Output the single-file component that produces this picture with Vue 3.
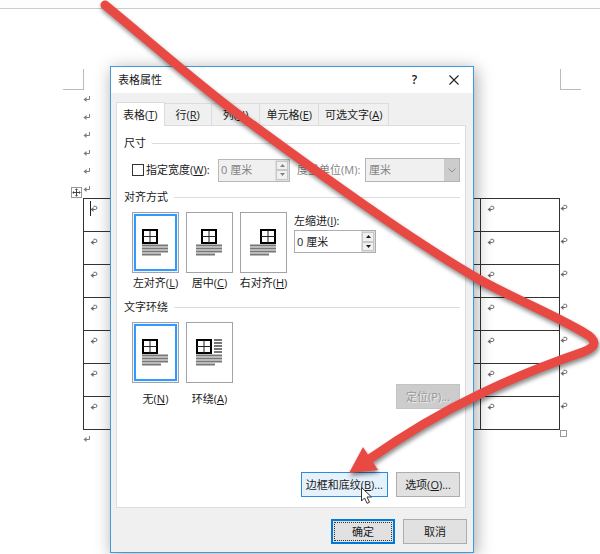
<template>
  <div class="word">
    <svg class="defs" aria-hidden="true">
      <symbol id="para-mark" viewBox="0 0 8 8">
        <path d="M6.5 1v3.5H2.5" fill="none" stroke="#7c7c7c" />
        <path d="M0.5 4.5L3.5 2v5z" fill="#7c7c7c" />
      </symbol>
      <symbol id="cell-mark" viewBox="0 0 8 8">
        <path d="M3.5 1.3h1.8a1.6 1.6 0 0 1 0 3.2H2.5" fill="none" stroke="#6c6c6c" />
        <path d="M0.5 4.5L3.5 2v5z" fill="#6c6c6c" />
      </symbol>
    </svg>

    <main class="document">
      <div class="ruler"></div>
      <div class="corners">
        <span class="corner corner-left"></span>
        <span class="corner corner-right"></span>
      </div>
      <div class="content">
        <div v-for="n in 6" :key="n" class="para">
          <svg class="mark"><use href="#para-mark" /></svg>
        </div>
        <div class="table-wrap">
          <svg class="move-handle" viewBox="0 0 11 11">
            <rect x="0.5" y="0.5" width="10" height="10" fill="#fff" stroke="#999" />
            <path d="M5.5 2v7M2 5.5h7" stroke="#444" />
            <path d="M5.5 1.2L7 3H4zM5.5 9.8L7 8H4zM1.2 5.5L3 4v3zM9.8 5.5L8 4v3z" fill="#444" />
          </svg>
          <span class="caret"></span>
          <table>
            <tbody>
              <tr v-for="r in 7" :key="r">
                <td v-for="c in 6" :key="c">
                  <svg class="mark"><use href="#cell-mark" /></svg>
                </td>
              </tr>
            </tbody>
          </table>
          <div class="row-ends">
            <div v-for="r in 7" :key="r" class="row-end">
              <svg class="mark"><use href="#cell-mark" /></svg>
            </div>
          </div>
          <span class="resize-handle"></span>
        </div>
        <div class="para">
          <svg class="mark"><use href="#para-mark" /></svg>
        </div>
      </div>
    </main>

    <section class="dialog" role="dialog" aria-labelledby="dialog-title">
      <header class="title-bar">
        <h1 id="dialog-title">表格属性</h1>
        <button class="title-btn" aria-label="帮助">?</button>
        <button class="title-btn" aria-label="关闭">
          <svg width="10" height="10" viewBox="0 0 10 10">
            <path d="M0.5 0.5l9 9M9.5 0.5l-9 9" stroke="#222" stroke-width="1.1" />
          </svg>
        </button>
      </header>

      <div class="tabs" role="tablist">
        <button
          v-for="tab in tabs"
          :key="tab.key"
          class="tab"
          :class="{ active: tab.key === activeTab, short: tab.text.length === 1 }"
          role="tab"
          @click="activeTab = tab.key"
        >{{ tab.text }}(<u>{{ tab.key }}</u>)</button>
      </div>

      <div class="panel">
        <h2>尺寸</h2>
        <div class="size-row">
          <label class="check">
            <input v-model="useWidth" type="checkbox" />
            <span>指定宽度(<u>W</u>):</span>
          </label>
          <div class="spinner width-spinner" :class="{ disabled: !useWidth }">
            <input v-model="width" type="text" aria-label="指定宽度" :disabled="!useWidth" />
            <div class="arrows">
              <button :disabled="!useWidth" aria-label="增加">
                <svg width="5" height="3" viewBox="0 0 5 3"><path d="M0 3L2.5 0 5 3z" fill="currentColor" /></svg>
              </button>
              <button :disabled="!useWidth" aria-label="减少">
                <svg width="5" height="3" viewBox="0 0 5 3"><path d="M0 0L2.5 3 5 0z" fill="currentColor" /></svg>
              </button>
            </div>
          </div>
          <label class="unit-label" for="unit">度量单位(M):</label>
          <div class="select">
            <select id="unit" v-model="unit" :disabled="!useWidth">
              <option>厘米</option>
              <option>百分比</option>
            </select>
            <svg class="chevron" width="8" height="5" viewBox="0 0 8 5">
              <path d="M0.5 0.5L4 4 7.5 0.5" fill="none" stroke="#8c8c8c" />
            </svg>
          </div>
        </div>

        <h2>对齐方式</h2>
        <div class="option-row">
          <label v-for="a in aligns" :key="a.key" class="option">
            <input v-model="align" type="radio" name="align" :value="a.key" />
            <span class="tile">
              <svg width="27" height="27" viewBox="0 0 27 27">
                <rect :x="a.x + 1" y="1" width="14" height="13" fill="#fff" stroke="#000" stroke-width="2" />
                <path :d="`M${a.x + 8} 1v13M${a.x + 1} 7.5h14`" stroke="#222" />
                <path d="M0 16.5h26M0 19.5h26M0 22.5h26M0 25.5h19" stroke="#777" stroke-width="2" />
              </svg>
            </span>
            <span>{{ a.text }}(<u>{{ a.key }}</u>)</span>
          </label>
          <div class="indent">
            <label for="indent">左缩进(<u>I</u>):</label>
            <div class="spinner">
              <input id="indent" v-model="indent" type="text" />
              <div class="arrows">
                <button aria-label="增加">
                  <svg width="5" height="3" viewBox="0 0 5 3"><path d="M0 3L2.5 0 5 3z" fill="currentColor" /></svg>
                </button>
                <button aria-label="减少">
                  <svg width="5" height="3" viewBox="0 0 5 3"><path d="M0 0L2.5 3 5 0z" fill="currentColor" /></svg>
                </button>
              </div>
            </div>
          </div>
        </div>

        <h2>文字环绕</h2>
        <div class="option-row wrap-row">
          <label v-for="w in wraps" :key="w.key" class="option">
            <input v-model="wrap" type="radio" name="wrap" :value="w.key" />
            <span class="tile">
              <svg width="27" height="27" viewBox="0 0 27 27">
                <rect x="1" y="1" width="14" height="13" fill="#fff" stroke="#000" stroke-width="2" />
                <path d="M8 1v13M1 7.5h14" stroke="#222" />
                <path
                  v-if="w.around"
                  d="M18 1h8M18 4h8M18 7h8M18 10h8M18 13h8"
                  stroke="#777"
                  stroke-width="2"
                />
                <path d="M0 16.5h26M0 19.5h26M0 22.5h26M0 25.5h19" stroke="#777" stroke-width="2" />
              </svg>
            </span>
            <span>{{ w.text }}(<u>{{ w.key }}</u>)</span>
          </label>
          <button class="btn position-btn" :disabled="wrap === 'N'">定位(P)...</button>
        </div>

        <div class="actions">
          <button class="btn btn-hover">边框和底纹(<u>B</u>)...</button>
          <button class="btn">选项(<u>O</u>)...</button>
        </div>
      </div>

      <footer class="footer">
        <button class="btn btn-default">确定</button>
        <button class="btn">取消</button>
      </footer>
    </section>

    <svg class="annotation" width="600" height="554" viewBox="0 0 600 554" aria-hidden="true">
      <g class="arrow">
        <path
          d="M105 5C150 42 200 86 242 117C290 152 400 234 482 281C515 299 550 313 583 332Q605 344 583 352C548 364 515 377 480 394C440 413 405 434 368 460"
          fill="none"
          stroke="#e84a43"
          stroke-width="9"
          stroke-linecap="round"
        />
        <path d="M349 473L363 447L378 470z" fill="#e84a43" />
      </g>
      <path
        d="M361.5 487.5v13.5l3-3 2.6 5.3 2.4-1.1-2.5-5.2h4.5z"
        fill="#fff"
        stroke="#333"
      />
    </svg>
  </div>
</template>

<script setup>
import { ref } from "vue";

const tabs = [
  { key: "T", text: "表格" },
  { key: "R", text: "行" },
  { key: "U", text: "列" },
  { key: "E", text: "单元格" },
  { key: "A", text: "可选文字" },
];
const aligns = [
  { key: "L", text: "左对齐", x: 0 },
  { key: "C", text: "居中", x: 5 },
  { key: "H", text: "右对齐", x: 10 },
];
const wraps = [
  { key: "N", text: "无", around: false },
  { key: "A", text: "环绕", around: true },
];

const activeTab = ref("T");
const useWidth = ref(false);
const width = ref("0 厘米");
const unit = ref("厘米");
const align = ref("L");
const indent = ref("0 厘米");
const wrap = ref("N");
</script>

<style>
body {
  margin: 0;
  background: #fff;
}
</style>

<style scoped>
.word {
  position: relative;
  overflow: hidden;
  min-height: 100vh;
  font-family: "Open Sans", "Noto Sans CJK SC", sans-serif;
  font-size: 11px;
  line-height: 20px;
  color: #1a1a1a;
}
.word * {
  box-sizing: border-box;
}
.defs {
  position: absolute;
  width: 0;
  height: 0;
}
button,
input,
select {
  margin: 0;
  padding: 0;
  font: inherit;
  color: inherit;
}

/* document */
.ruler {
  height: 9px;
  background: #fdfdfd;
  border-bottom: 1px solid #ccc;
}
.corners {
  display: flex;
  justify-content: space-between;
  margin: 60px 19px 0 63px;
}
.corner {
  width: 21px;
  height: 21px;
  border-bottom: 1px solid #bbb;
}
.corner-left {
  border-right: 1px solid #bbb;
}
.corner-right {
  border-left: 1px solid #bbb;
}
.content {
  margin: 0 40px 0 83px;
}
.mark {
  display: block;
  width: 8px;
  height: 8px;
}
.para {
  display: flex;
  align-items: center;
  height: 18px;
}
.table-wrap {
  position: relative;
}
table {
  width: 100%;
  table-layout: fixed;
  border-collapse: collapse;
}
td {
  height: 33px;
  padding: 6px 0 0 6px;
  vertical-align: top;
  border: 1px solid #333;
}
.row-ends {
  position: absolute;
  top: 0;
  left: 100%;
}
.row-end {
  height: 33px;
  padding-top: 6px;
}
.move-handle {
  position: absolute;
  top: -11px;
  left: -12px;
  width: 11px;
  height: 11px;
}
.resize-handle {
  position: absolute;
  top: 100%;
  left: 100%;
  width: 7px;
  height: 7px;
  border: 1px solid #999;
}
.caret {
  position: absolute;
  top: 3px;
  left: 7px;
  width: 1px;
  height: 15px;
  background: #222;
}

/* dialog */
.dialog {
  position: absolute;
  top: 66px;
  left: 110px;
  width: 364px;
  background: #f0f0f0;
  border: 1px solid #3f9ae0;
  box-shadow: 2px 3px 16px rgba(0, 0, 0, 0.35);
}
.title-bar {
  display: flex;
  align-items: center;
  height: 26px;
  padding-left: 7px;
  background: #fff;
}
h1 {
  flex: 1;
  margin: 0;
  font-size: 11px;
  font-weight: normal;
}
.title-btn {
  display: flex;
  align-items: center;
  justify-content: center;
  width: 39px;
  height: 26px;
  font-size: 12px;
  font-weight: 600;
  background: none;
  border: none;
}
.tabs {
  display: flex;
  align-items: flex-end;
  height: 32px;
  padding: 0 5px;
}
.tab {
  height: 22px;
  padding: 0 6px;
  line-height: 20px;
  white-space: nowrap;
  background: #f0f0f0;
  border: 1px solid #dcdcdc;
  border-width: 1px 1px 0 0;
}
.tab.short {
  padding: 0 11px;
}
.tab.active {
  z-index: 1;
  height: 24px;
  margin-bottom: -1px;
  background: #fff;
  border-left-width: 1px;
}
.panel {
  margin: 0 7px 0 5px;
  padding: 7px 5px 10px 7px;
  background: #fff;
  border: 1px solid #dcdcdc;
}
h2 {
  display: flex;
  align-items: center;
  gap: 6px;
  margin: 0;
  font-size: 11px;
  font-weight: normal;
}
h2::after {
  content: "";
  flex: 1;
  height: 1px;
  background: #dcdcdc;
}
.size-row {
  display: flex;
  align-items: center;
  margin: 5px 0;
  padding-left: 8px;
}
.check {
  display: flex;
  align-items: center;
  gap: 2px;
  width: 86px;
  white-space: nowrap;
}
.check input {
  appearance: none;
  width: 12px;
  height: 12px;
  background: #fff;
  border: 1px solid #333;
}
.check input:checked {
  background: #333;
  box-shadow: inset 0 0 0 2px #fff;
}
.spinner {
  display: flex;
  width: 82px;
  height: 23px;
  background: #fff;
  border: 1px solid #abadb3;
}
.spinner input {
  flex: 1;
  min-width: 0;
  padding-left: 2px;
  background: none;
  border: none;
  outline: none;
}
.arrows {
  display: flex;
  flex-direction: column;
  width: 14px;
  padding: 1px;
  background: #ddd;
}
.arrows button {
  display: flex;
  flex: 1;
  align-items: center;
  justify-content: center;
  background: #f0f0f0;
  border: 1px solid #c8c8c8;
}
.width-spinner {
  width: 72px;
}
.spinner.disabled {
  color: #838383;
  background: #f0f0f0;
  border-color: #b8b8b8;
}
.unit-label {
  flex: 1;
  padding-left: 7px;
  color: #838383;
  white-space: nowrap;
}
.select {
  position: relative;
  width: 95px;
}
.select select {
  display: block;
  appearance: none;
  width: 100%;
  height: 24px;
  padding-left: 3px;
  color: #838383;
  opacity: 1;
  background: linear-gradient(#ccc, #ccc) right / 15px 100% no-repeat #f0f0f0;
  border: 1px solid #b4b4b4;
  border-radius: 0;
}
.chevron {
  position: absolute;
  top: 10px;
  right: 4px;
  pointer-events: none;
}
.option-row {
  display: flex;
  gap: 7px;
  margin: 5px 0 4px;
  padding-left: 8px;
}
.option {
  position: relative;
  display: flex;
  flex-direction: column;
  align-items: center;
  width: 47px;
  white-space: nowrap;
}
.option input {
  position: absolute;
  opacity: 0;
}
.tile {
  display: flex;
  align-items: center;
  justify-content: center;
  width: 47px;
  height: 61px;
  background: #fff;
  border: 1px solid #a0a3aa;
}
.option input:checked + .tile {
  box-shadow: inset 0 0 0 1px #eef5fc, inset 0 0 0 3px #3399ff;
}
.indent {
  display: flex;
  flex-direction: column;
}
.indent label {
  line-height: 18px;
}
.wrap-row {
  margin-bottom: 0;
}
.wrap-row .option {
  gap: 6px;
}
.btn {
  min-width: 64px;
  height: 25px;
  padding: 0 4px;
  line-height: 20px;
  white-space: nowrap;
  background: #e1e1e1;
  border: 1px solid #adadad;
}
.btn:disabled {
  color: #999;
  text-shadow: 1px 1px 0 #eee;
  background: #ccc;
  border-color: #c4c4c4;
}
.position-btn {
  align-self: flex-end;
  margin-left: auto;
}
.actions {
  display: flex;
  justify-content: flex-end;
  gap: 8px;
  margin-top: 63px;
}
.btn-hover {
  background: #e5f1fb;
  border-color: #2a8ade;
}
.footer {
  display: flex;
  justify-content: flex-end;
  gap: 8px;
  padding: 11px 6px 8px;
}
.btn-default {
  border: 2px solid #0078d7;
  outline: 1px dotted #333;
  outline-offset: -4px;
}

.annotation {
  position: absolute;
  top: 0;
  left: 0;
  pointer-events: none;
}
.arrow {
  filter: drop-shadow(1px 3px 2px rgba(0, 0, 0, 0.45));
}
</style>
